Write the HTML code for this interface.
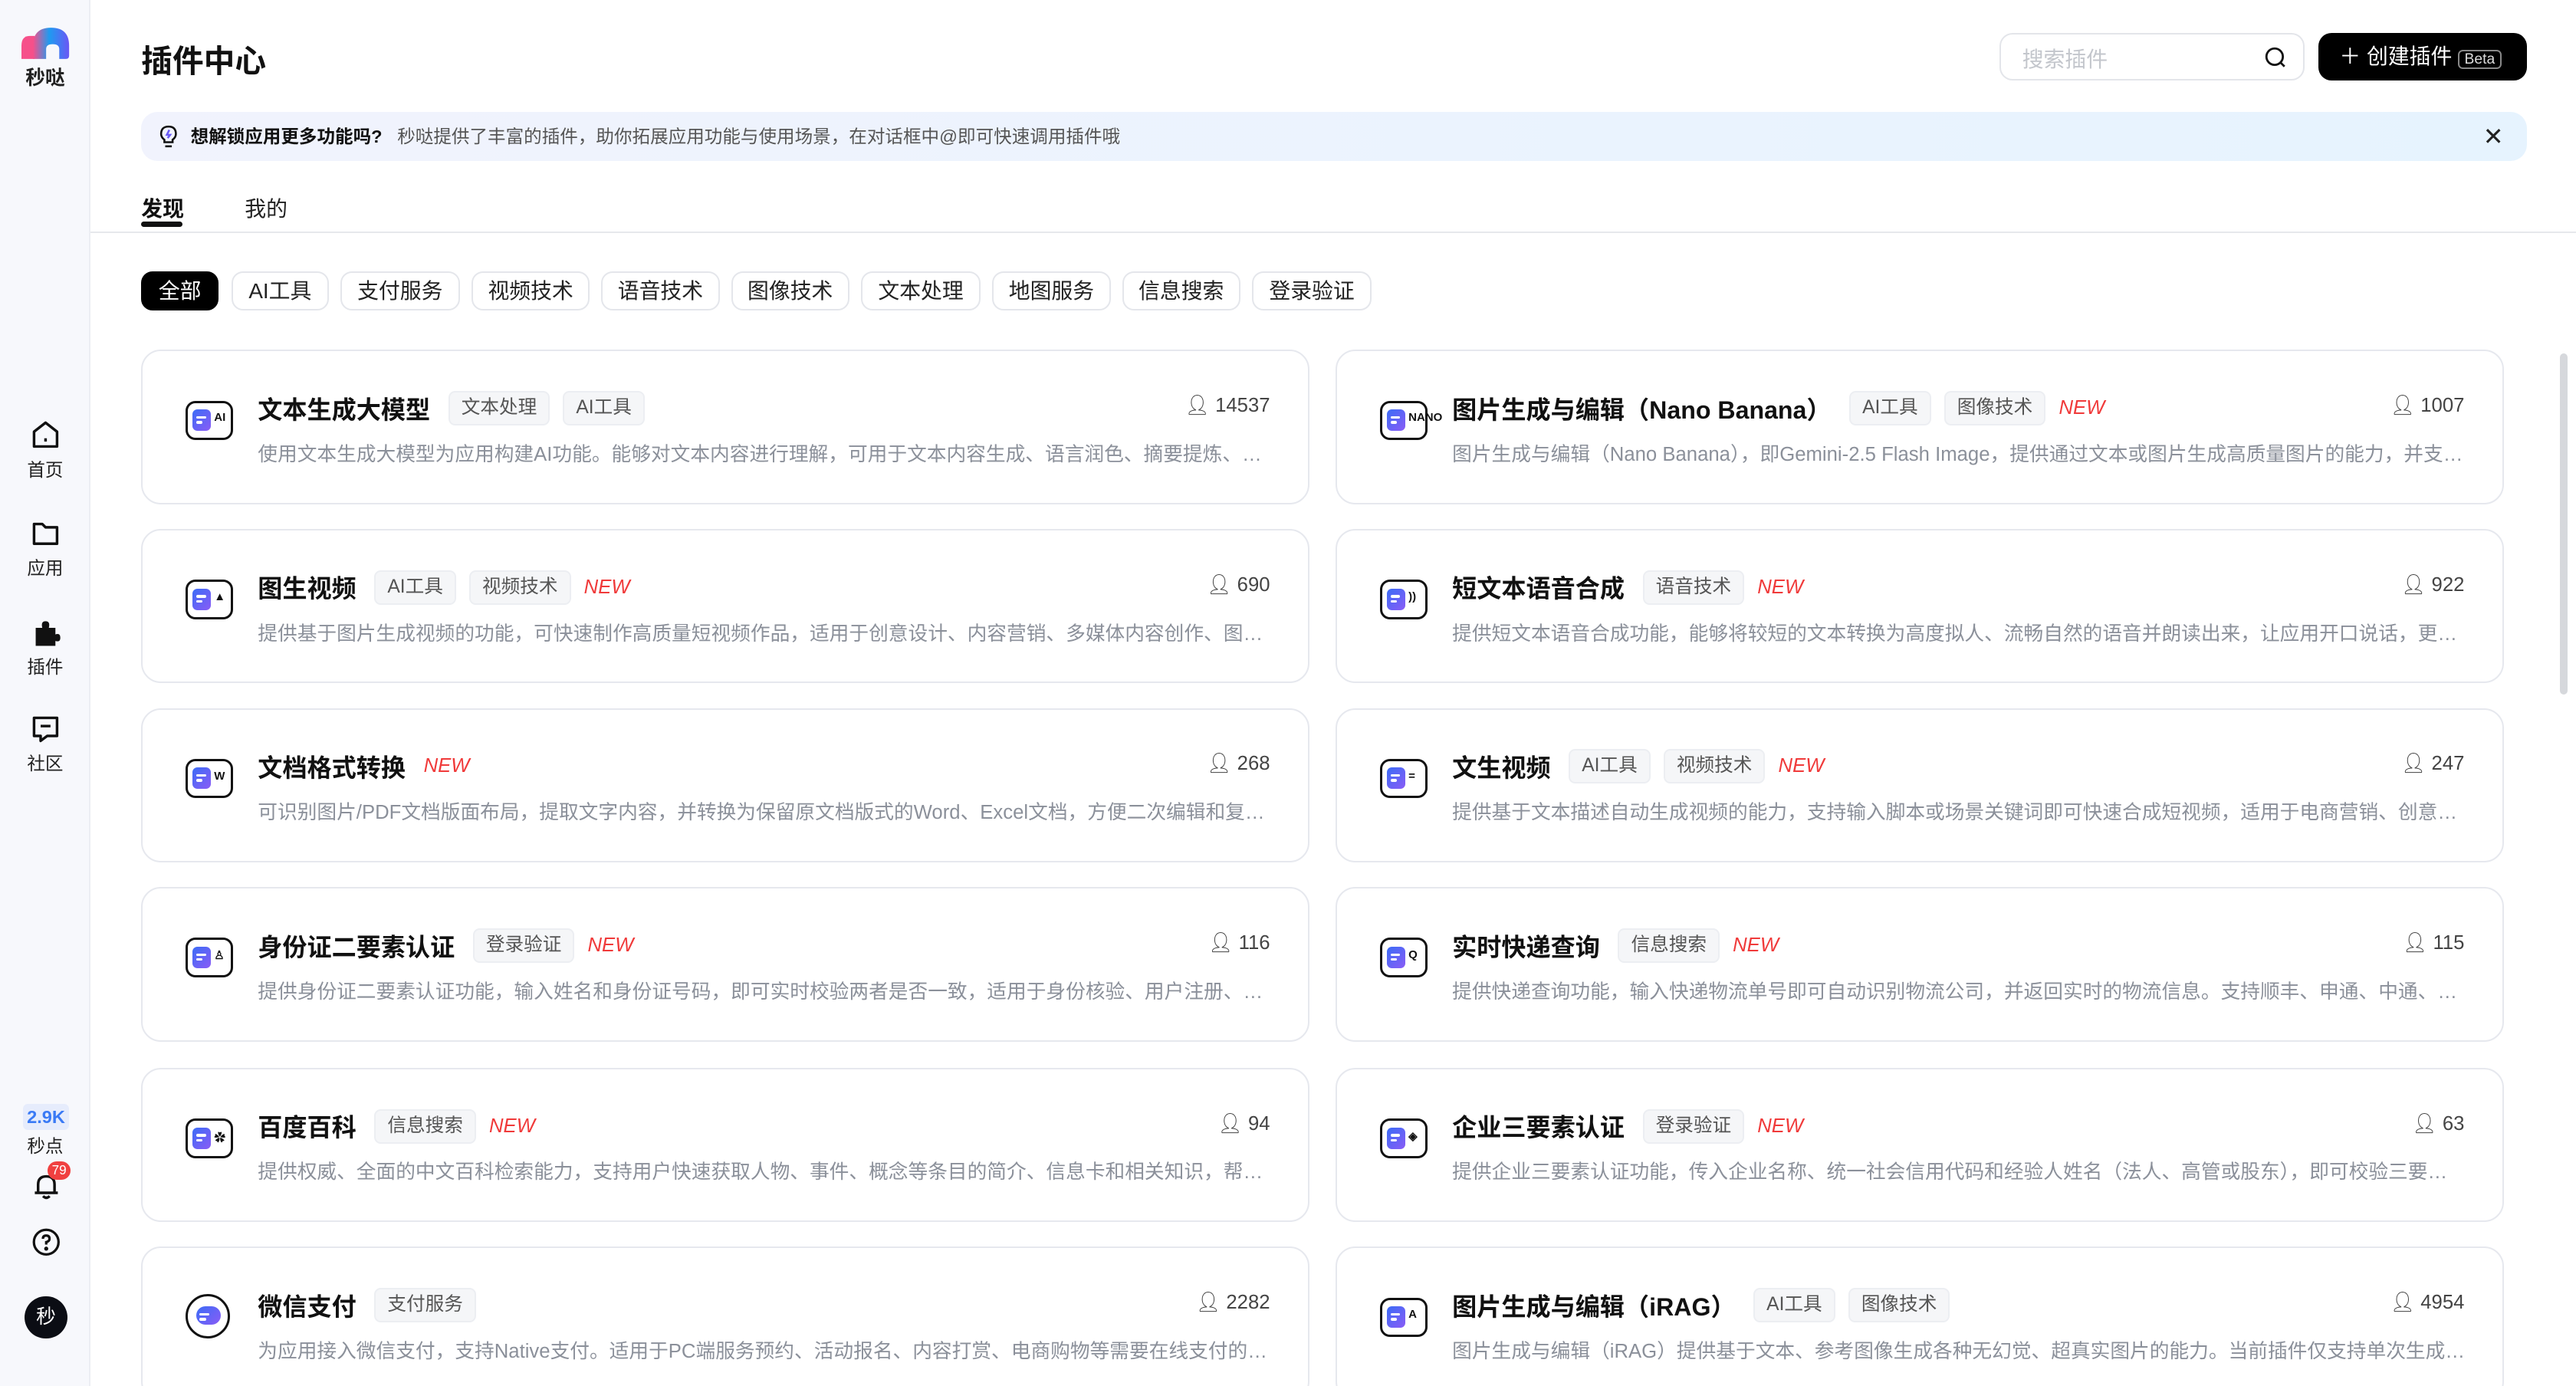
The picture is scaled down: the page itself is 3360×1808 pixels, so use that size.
<!DOCTYPE html>
<html><head><meta charset="utf-8"><style>
*{box-sizing:border-box;margin:0;padding:0}
html,body{width:3360px;height:1808px;overflow:hidden;background:#fff}
#r{zoom:2.142857;width:1568px;height:844px;position:relative;font-family:"Liberation Sans","Noto Sans CJK SC",sans-serif;color:#111}
.sb{position:absolute;left:0;top:0;width:55px;height:844px;background:#f7f8fc;border-right:1px solid #eceef3}
.ni{position:absolute;left:0;width:55px;text-align:center;font-size:11px;color:#222}
.ni svg{display:block;margin:0 auto 2px}
.a{position:absolute}
.chip{position:absolute;top:165px;height:24px;border:1px solid #e4e6eb;border-radius:7px;font-size:13px;line-height:22px;text-align:center;color:#222}
.card{position:absolute;width:711px;height:94px;border:1px solid #e6e8ee;border-radius:12px;background:#fff}
.ic{position:absolute;left:26px;top:30px;width:29px;height:24px;border:1.6px solid #111;border-radius:6px}
.ic i{position:absolute;left:3px;top:4px;width:11px;height:13px;border-radius:3px;background:linear-gradient(135deg,#3b6cf6,#8a5cf6)}
.ic i:before,.ic i:after{content:"";position:absolute;left:2px;height:1.6px;background:#fff;border-radius:1px}
.ic i:before{top:4px;width:6px}.ic i:after{top:7px;width:4px}
.ic b{position:absolute;left:16px;top:5px;font-size:7px;font-weight:bold}
.t{position:absolute;left:70px;top:24px;display:flex;align-items:center;gap:8px;white-space:nowrap}
.t h3{font-size:15px;font-weight:bold;margin-right:3px}
.tag{font-size:11.5px;color:#555;background:#f5f6f8;border:1px solid #eceef2;border-radius:4px;padding:0 7px;height:21px;line-height:19px}
.new{font-size:12px;color:#f03a3a;font-style:italic;font-weight:500}
.d{position:absolute;left:70px;top:53px;width:617px;font-size:12px;color:#8b909a;white-space:nowrap;overflow:hidden;text-overflow:ellipsis}
.n{position:absolute;right:23px;top:26px;font-size:12px;color:#444;display:flex;align-items:center;gap:3px}
</style></head><body><div id="r">
<div class="sb">
 <svg class="a" style="left:13px;top:16px" width="30" height="22" viewBox="0 0 30 22"><defs><linearGradient id="g" x1="0" x2="1"><stop offset="0" stop-color="#f6508a"/><stop offset=".45" stop-color="#1e9bf0"/><stop offset="1" stop-color="#6b57f5"/></linearGradient></defs><path d="M0 20V12Q0 6 5 6L8 6V20Z" fill="#f6508a"/><path d="M7 20V12Q7 1 18 1Q29 1 29 12V18Q29 20 27 20H23V14Q23 11 19 11Q15 11 15 14V20Z" fill="url(#g)"/></svg>
 <div class="ni" style="top:38px;font-size:12px;font-weight:bold">秒哒</div>
 <div class="ni" style="top:255px"><svg width="20" height="20" viewBox="0 0 20 20" fill="none" stroke="#111" stroke-width="1.6"><path d="M3 8L10 2.5L17 8V17H3Z" stroke-linejoin="round"/><path d="M10 12v2"/></svg>首页</div>
 <div class="ni" style="top:315px"><svg width="20" height="20" viewBox="0 0 20 20" fill="none" stroke="#111" stroke-width="1.6"><path d="M3 4H8L10 6H17V16H3Z" stroke-linejoin="round"/></svg>应用</div>
 <div class="ni" style="top:375px"><svg width="20" height="20" viewBox="0 0 20 20"><path d="M4 7H8Q7 3 10 3Q13 3 12 7H16V11Q19 10 19 13Q19 16 16 15V18H4Z" fill="#111"/></svg>插件</div>
 <div class="ni" style="top:434px"><svg width="20" height="20" viewBox="0 0 20 20" fill="none" stroke="#111" stroke-width="1.6"><path d="M3 3H17V14H11L7 17V14H3Z" stroke-linejoin="round"/><path d="M7 8h6"/></svg>社区</div>
 <div class="a" style="left:14px;top:672px;width:28px;height:16px;background:#e6ecfc;border-radius:3px;font-size:11px;font-weight:bold;color:#3a7af5;text-align:center;line-height:16px">2.9K</div>
 <div class="ni" style="top:689px">秒点</div>
 <svg class="a" style="left:18px;top:712px" width="20" height="20" viewBox="0 0 20 20" fill="none" stroke="#111" stroke-width="1.6"><path d="M5 14V9Q5 4 10 4Q15 4 15 9V14M3 14H17M8 16Q10 18 12 16"/></svg>
 <div class="a" style="left:29px;top:707px;width:14px;height:11px;background:#f04040;border-radius:6px;color:#fff;font-size:8px;text-align:center;line-height:11px">79</div>
 <svg class="a" style="left:19px;top:747px" width="18" height="18" viewBox="0 0 18 18" fill="none" stroke="#111" stroke-width="1.5"><circle cx="9" cy="9" r="7.5"/><path d="M7 7Q7 5 9 5Q11 5 11 7Q11 8.5 9 9V10.5"/><circle cx="9" cy="13" r=".5" fill="#111"/></svg>
 <div class="a" style="left:15px;top:789px;width:26px;height:26px;border-radius:50%;background:#0b0d14;color:#fff;font-size:12px;text-align:center;line-height:26px">秒</div>
</div>
<div class="a" style="left:86px;top:22px;font-size:19px;font-weight:bold">插件中心</div>
<div class="a" style="left:1217px;top:20px;width:186px;height:29px;border:1px solid #e3e5ea;border-radius:8px;font-size:13px;color:#c3c6cc;padding:5px 0 0 13px">搜索插件
 <svg class="a" style="right:10px;top:7px" width="14" height="14" viewBox="0 0 14 14" fill="none" stroke="#111" stroke-width="1.3"><circle cx="6.5" cy="6.5" r="5"/><path d="M10 10l2.5 2.5"/></svg></div>
<div class="a" style="left:1411px;top:20px;width:127px;height:29px;background:#000;border-radius:8px;color:#fff;font-size:13px;line-height:29px;padding-left:13px">＋ 创建插件 <span style="font-size:9px;border:1px solid #888;border-radius:3px;padding:0 3px;color:#ddd">Beta</span></div>
<div class="a" style="left:86px;top:68px;width:1452px;height:30px;border-radius:10px;background:linear-gradient(90deg,#f1f3fd,#e6f3fe);font-size:11px;line-height:30px;padding-left:30px;color:#555">
 <svg class="a" style="left:11px;top:8px" width="11" height="14" viewBox="0 0 11 14" fill="none" stroke="#111" stroke-width="1.2"><path d="M3 9Q1 7.5 1 5.5Q1 1 5.5 1Q10 1 10 5.5Q10 7.5 8 9V10.5H3Z"/><path d="M3.5 13h4"/><path d="M6 3L4.5 6H6.5L5 8" stroke="#6b5cf6"/></svg>
 <b style="color:#111">想解锁应用更多功能吗?</b>&nbsp;&nbsp;&nbsp;秒哒提供了丰富的插件，助你拓展应用功能与使用场景，在对话框中@即可快速调用插件哦
 <span class="a" style="right:14px;top:0;font-size:15px;color:#222">✕</span></div>
<div class="a" style="left:86px;top:117px;font-size:13px;font-weight:bold">发现</div>
<div class="a" style="left:86px;top:135px;width:25px;height:3px;border-radius:2px;background:#111"></div>
<div class="a" style="left:149px;top:117px;font-size:13px;color:#222">我的</div>
<div class="a" style="left:55px;top:141px;width:1513px;height:1px;background:#e6e8ec"></div>
<div class="chip" style="left:86px;width:47px;background:#000;color:#fff;border-color:#000">全部</div>
<div class="chip" style="left:141px;width:59px">AI工具</div>
<div class="chip" style="left:207px;width:73px">支付服务</div>
<div class="chip" style="left:287px;width:72px">视频技术</div>
<div class="chip" style="left:366px;width:72px">语音技术</div>
<div class="chip" style="left:445px;width:72px">图像技术</div>
<div class="chip" style="left:524px;width:73px">文本处理</div>
<div class="chip" style="left:604px;width:72px">地图服务</div>
<div class="chip" style="left:683px;width:72px">信息搜索</div>
<div class="chip" style="left:762px;width:73px">登录验证</div>
<div class="a" style="left:1558px;top:215px;width:5px;height:208px;border-radius:3px;background:#d6d8dc"></div>

<div class="card" style="left:86px;top:213px"><div class="ic"><i></i><b>AI</b></div><div class="t"><h3>文本生成大模型</h3><span class="tag">文本处理</span><span class="tag">AI工具</span></div><div class="n">👤︎ 14537</div><div class="d">使用文本生成大模型为应用构建AI功能。能够对文本内容进行理解，可用于文本内容生成、语言润色、摘要提炼、翻译等场景，满足多样化需求</div></div>
<div class="card" style="left:813px;top:213px"><div class="ic"><i></i><b>NANO</b></div><div class="t"><h3>图片生成与编辑（Nano Banana）</h3><span class="tag">AI工具</span><span class="tag">图像技术</span><span class="new">NEW</span></div><div class="n">👤︎ 1007</div><div class="d">图片生成与编辑（Nano Banana），即Gemini-2.5 Flash Image，提供通过文本或图片生成高质量图片的能力，并支持对多张图片进行编辑</div></div>
<div class="card" style="left:86px;top:322px"><div class="ic"><i></i><b>▲</b></div><div class="t"><h3>图生视频</h3><span class="tag">AI工具</span><span class="tag">视频技术</span><span class="new">NEW</span></div><div class="n">👤︎ 690</div><div class="d">提供基于图片生成视频的功能，可快速制作高质量短视频作品，适用于创意设计、内容营销、多媒体内容创作、图片动态化等场景</div></div>
<div class="card" style="left:813px;top:322px"><div class="ic"><i></i><b>))</b></div><div class="t"><h3>短文本语音合成</h3><span class="tag">语音技术</span><span class="new">NEW</span></div><div class="n">👤︎ 922</div><div class="d">提供短文本语音合成功能，能够将较短的文本转换为高度拟人、流畅自然的语音并朗读出来，让应用开口说话，更具个性化体验</div></div>
<div class="card" style="left:86px;top:431px"><div class="ic"><i></i><b>W</b></div><div class="t"><h3>文档格式转换</h3><span class="new">NEW</span></div><div class="n">👤︎ 268</div><div class="d">可识别图片/PDF文档版面布局，提取文字内容，并转换为保留原文档版式的Word、Excel文档，方便二次编辑和复制，可支持多种场景</div></div>
<div class="card" style="left:813px;top:431px"><div class="ic"><i></i><b>=</b></div><div class="t"><h3>文生视频</h3><span class="tag">AI工具</span><span class="tag">视频技术</span><span class="new">NEW</span></div><div class="n">👤︎ 247</div><div class="d">提供基于文本描述自动生成视频的能力，支持输入脚本或场景关键词即可快速合成短视频，适用于电商营销、创意宣传、教育培训等场景</div></div>
<div class="card" style="left:86px;top:540px"><div class="ic"><i></i><b>♙</b></div><div class="t"><h3>身份证二要素认证</h3><span class="tag">登录验证</span><span class="new">NEW</span></div><div class="n">👤︎ 116</div><div class="d">提供身份证二要素认证功能，输入姓名和身份证号码，即可实时校验两者是否一致，适用于身份核验、用户注册、实名认证等场景</div></div>
<div class="card" style="left:813px;top:540px"><div class="ic"><i></i><b>Q</b></div><div class="t"><h3>实时快递查询</h3><span class="tag">信息搜索</span><span class="new">NEW</span></div><div class="n">👤︎ 115</div><div class="d">提供快递查询功能，输入快递物流单号即可自动识别物流公司，并返回实时的物流信息。支持顺丰、申通、中通、圆通、韵达等快递公司</div></div>
<div class="card" style="left:86px;top:650px"><div class="ic"><i></i><b>✿</b></div><div class="t"><h3>百度百科</h3><span class="tag">信息搜索</span><span class="new">NEW</span></div><div class="n">👤︎ 94</div><div class="d">提供权威、全面的中文百科检索能力，支持用户快速获取人物、事件、概念等条目的简介、信息卡和相关知识，帮助在搜索场景中使用</div></div>
<div class="card" style="left:813px;top:650px"><div class="ic"><i></i><b>◈</b></div><div class="t"><h3>企业三要素认证</h3><span class="tag">登录验证</span><span class="new">NEW</span></div><div class="n">👤︎ 63</div><div class="d">提供企业三要素认证功能，传入企业名称、统一社会信用代码和经验人姓名（法人、高管或股东），即可校验三要素是否一致</div></div>
<div class="card" style="left:86px;top:759px"><div class="ic" style="border-radius:50%;width:27px;height:27px;top:28px"><i style="left:5px;top:6px;width:15px;height:11px;border-radius:6px"></i></div><div class="t"><h3>微信支付</h3><span class="tag">支付服务</span></div><div class="n">👤︎ 2282</div><div class="d">为应用接入微信支付，支持Native支付。适用于PC端服务预约、活动报名、内容打赏、电商购物等需要在线支付的场景，助力业务变现</div></div>
<div class="card" style="left:813px;top:759px"><div class="ic"><i></i><b>A</b></div><div class="t"><h3>图片生成与编辑（iRAG）</h3><span class="tag">AI工具</span><span class="tag">图像技术</span></div><div class="n">👤︎ 4954</div><div class="d">图片生成与编辑（iRAG）提供基于文本、参考图像生成各种无幻觉、超真实图片的能力。当前插件仅支持单次生成1张1024x1024图片</div></div>
</div></body></html>
